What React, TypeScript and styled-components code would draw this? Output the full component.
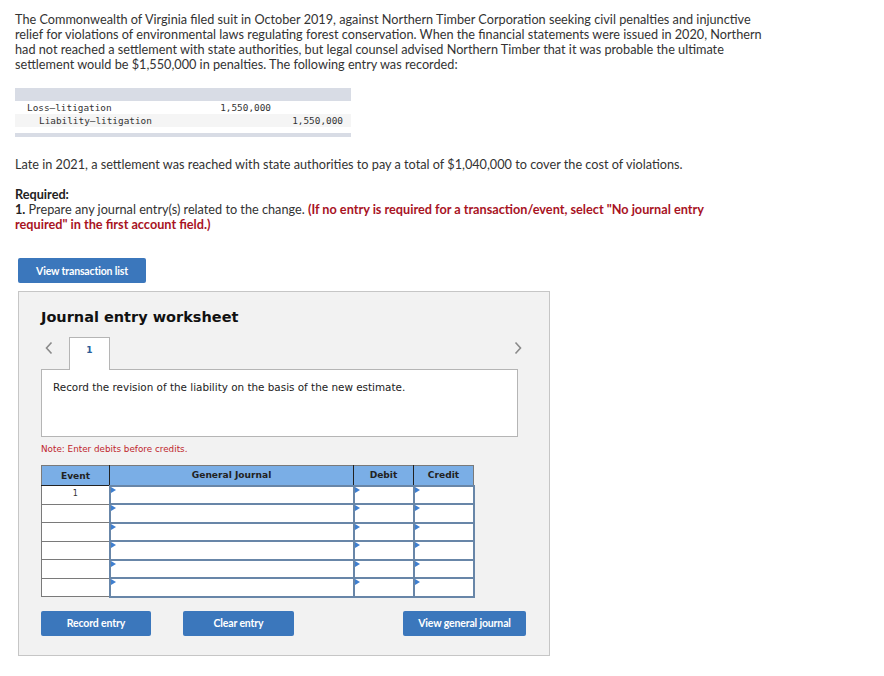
import React from "react";
import styled, { createGlobalStyle } from "styled-components";

const Global = createGlobalStyle`
  html, body { margin: 0; padding: 0; background: #fff; }
  body { font-family: Lato, "Open Sans", Arial, sans-serif; color: #333; }
  * { box-sizing: border-box; }
`;

const Page = styled.div`
  padding: 12px 0 20px 15px;
  width: 884px;
`;

const Para = styled.p`
  margin: 0;
  font-family: Lato, "Open Sans", sans-serif;
  font-size: 12.7px;
  line-height: 15px;
  color: #333;
  white-space: nowrap;
`;

const RefTable = styled.div`
  margin-top: 16px;
  width: 336px;
  font-family: "DejaVu Sans Mono", "Liberation Mono", monospace;
  font-size: 9.4px;
  color: #333;
`;

const RefBand = styled.div<{ $h: number }>`
  height: ${(p) => p.$h}px;
  background: #d8dce5;
`;

const RefRow = styled.div<{ $alt?: boolean }>`
  display: grid;
  grid-template-columns: 170px 86px 72px;
  height: 13px;
  align-items: center;
  background: ${(p) => (p.$alt ? "#f5f5f5" : "#fff")};
`;

const RefAcct = styled.span<{ $indent?: boolean }>`
  padding-left: ${(p) => (p.$indent ? 24 : 12)}px;
`;

const RefAmt = styled.span`
  text-align: right;
`;

const RefGap = styled.div`
  height: 6px;
`;

const Late = styled(Para)`
  margin-top: 20px;
`;

const Required = styled.div`
  margin-top: 15px;
  font-size: 12.7px;
  line-height: 15px;
  font-weight: 700;
  color: #222;
`;

const Question = styled(Para)`
  color: #333;
`;

const Bold = styled.b`
  color: #222;
`;

const Red = styled.b`
  color: #a8131f;
`;

const Button = styled.button`
  font-family: Lato, "Open Sans", sans-serif;
  font-weight: 700;
  font-size: 10.5px;
  letter-spacing: -0.15px;
  color: #fff;
  background: #3b77bc;
  border: none;
  border-radius: 2px;
  height: 25px;
  padding: 0;
  cursor: pointer;
`;

const TxButton = styled(Button)`
  margin: 26px 0 0 3px;
  width: 128px;
  display: block;
`;

const Worksheet = styled.div`
  margin: 8px 0 0 3px;
  width: 532px;
  height: 365px;
  background: #f2f2f2;
  border: 1px solid #c6c6c6;
  padding: 0 22px 0 22px;
  display: flex;
  flex-direction: column;
`;

const Title = styled.h2`
  margin: 16px 0 0 0;
  font-family: "DejaVu Sans", Verdana, sans-serif;
  font-weight: 700;
  font-size: 14.5px;
  line-height: 18px;
  color: #111;
`;

const TabRow = styled.div`
  margin-top: 11px;
  display: flex;
  align-items: flex-end;
  position: relative;
  height: 32px;
`;

const Chevron = styled.span<{ $right?: boolean }>`
  position: absolute;
  top: 4px;
  ${(p) => (p.$right ? "right: 2px;" : "left: 1px;")}
  width: 14px;
  height: 14px;
  display: flex;
  align-items: center;
  justify-content: center;
`;

const Tab = styled.div`
  margin-left: 28px;
  width: 41px;
  height: 33px;
  background: #fff;
  border: 1px solid #b5b5b5;
  border-bottom: none;
  margin-bottom: -1px;
  position: relative;
  z-index: 1;
  font-family: "DejaVu Sans", Verdana, sans-serif;
  font-weight: 700;
  font-size: 9px;
  color: #2a5d99;
  text-align: center;
  padding-top: 7px;
`;

const Desc = styled.div`
  height: 68px;
  width: 477px;
  background: #fff;
  border: 1px solid #b5b5b5;
  font-family: "DejaVu Sans", Verdana, sans-serif;
  font-size: 10.4px;
  color: #222;
  padding: 11px 0 0 11px;
`;

const Note = styled.div`
  margin-top: 7px;
  font-family: "DejaVu Sans", Verdana, sans-serif;
  font-size: 8.8px;
  color: #c0262d;
`;

const Grid = styled.table`
  margin-top: 11px;
  border-collapse: collapse;
  width: 432px;
  table-layout: fixed;
  border: 1px solid #7a7a7a;
`;

const Th = styled.th<{ $w: number }>`
  width: ${(p) => p.$w}px;
  height: 20px;
  background: #7aaee6;
  border-left: 1px solid #222;
  border-bottom: 1px solid #222;
  font-family: "DejaVu Sans", Verdana, sans-serif;
  font-weight: 700;
  font-size: 9.1px;
  color: #222;
  padding: 0;
  &:first-child { border-left: none; }
`;

const EventTd = styled.td`
  height: 18.5px;
  background: #fff;
  border: 1px solid #7a7a7a;
  border-left: none;
  text-align: center;
  font-family: "DejaVu Sans", Verdana, sans-serif;
  font-size: 8px;
  color: #333;
  vertical-align: top;
  padding: 3px 0 0 0;
`;

const InputTd = styled.td`
  padding: 0;
  height: 18.5px;
  border: 2px solid #6886a8;
  background: #fff;
  position: relative;
`;

const Marker = styled.span`
  position: absolute;
  left: 0;
  top: 0;
  width: 0;
  height: 0;
  border-top: 3px solid transparent;
  border-bottom: 3px solid transparent;
  border-left: 5px solid #3f7fcf;
`;

const Actions = styled.div`
  margin-top: 13px;
  width: 485px;
  display: flex;
  align-items: center;
`;

const ActionButton = styled(Button)<{ $w: number; $ml: number }>`
  width: ${(p) => p.$w}px;
  margin-left: ${(p) => p.$ml}px;
`;

const LeftChevron = () => (
  <svg width="10" height="14" viewBox="0 0 10 14">
    <path d="M7.5 1.5 L2.5 7 L7.5 12.5" fill="none" stroke="#8a8a8a" strokeWidth="1.6" />
  </svg>
);

const RightChevron = () => (
  <svg width="10" height="14" viewBox="0 0 10 14">
    <path d="M2.5 1.5 L7.5 7 L2.5 12.5" fill="none" stroke="#8a8a8a" strokeWidth="1.6" />
  </svg>
);

export default function App() {
  const rows = ["1", "", "", "", "", ""];
  return (
    <>
      <Global />
      <Page>
        <Para>
          The Commonwealth of Virginia filed suit in October 2019, against Northern Timber Corporation seeking civil penalties and injunctive
          <br />
          relief for violations of environmental laws regulating forest conservation. When the financial statements were issued in 2020, Northern
          <br />
          had not reached a settlement with state authorities, but legal counsel advised Northern Timber that it was probable the ultimate
          <br />
          settlement would be $1,550,000 in penalties. The following entry was recorded:
        </Para>

        <RefTable>
          <RefBand $h={13} />
          <RefRow>
            <RefAcct>Loss–litigation</RefAcct>
            <RefAmt>1,550,000</RefAmt>
            <span />
          </RefRow>
          <RefRow $alt>
            <RefAcct $indent>Liability–litigation</RefAcct>
            <span />
            <RefAmt>1,550,000</RefAmt>
          </RefRow>
          <RefGap />
          <RefBand $h={4} />
        </RefTable>

        <Late>
          Late in 2021, a settlement was reached with state authorities to pay a total of $1,040,000 to cover the cost of violations.
        </Late>

        <Required>Required:</Required>
        <Question>
          <Bold>1.</Bold> Prepare any journal entry(s) related to the change.{" "}
          <Red>(If no entry is required for a transaction/event, select "No journal entry</Red>
          <br />
          <Red>required" in the first account field.)</Red>
        </Question>

        <TxButton>View transaction list</TxButton>

        <Worksheet>
          <Title>Journal entry worksheet</Title>
          <TabRow>
            <Chevron>
              <LeftChevron />
            </Chevron>
            <Tab>1</Tab>
            <Chevron $right>
              <RightChevron />
            </Chevron>
          </TabRow>
          <Desc>Record the revision of the liability on the basis of the new estimate.</Desc>
          <Note>Note: Enter debits before credits.</Note>
          <Grid>
            <thead>
              <tr>
                <Th $w={68}>Event</Th>
                <Th $w={244}>General Journal</Th>
                <Th $w={60}>Debit</Th>
                <Th $w={60}>Credit</Th>
              </tr>
            </thead>
            <tbody>
              {rows.map((r, i) => (
                <tr key={i}>
                  <EventTd>{r}</EventTd>
                  <InputTd>
                    <Marker />
                  </InputTd>
                  <InputTd>
                    <Marker />
                  </InputTd>
                  <InputTd>
                    <Marker />
                  </InputTd>
                </tr>
              ))}
            </tbody>
          </Grid>
          <Actions>
            <ActionButton $w={110} $ml={0}>Record entry</ActionButton>
            <ActionButton $w={111} $ml={32}>Clear entry</ActionButton>
            <ActionButton $w={123} $ml={109}>View general journal</ActionButton>
          </Actions>
        </Worksheet>
      </Page>
    </>
  );
}
